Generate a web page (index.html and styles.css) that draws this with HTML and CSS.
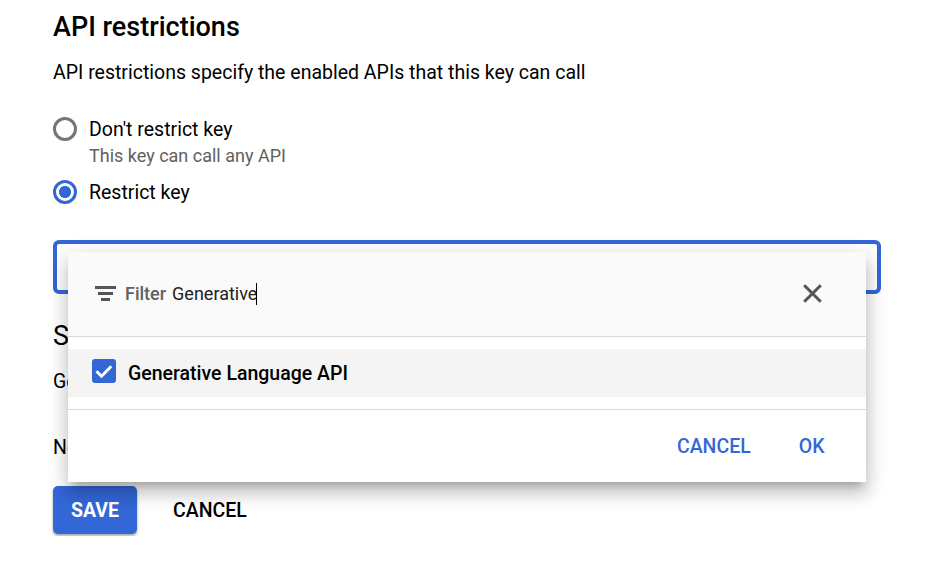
FILE: index.html
```html
<!DOCTYPE html>
<html lang="en">
<head>
<meta charset="utf-8">
<title>API restrictions</title>
<link rel="stylesheet" href="styles.css">
</head>
<body>
<main class="page">
  <h2 class="title">API restrictions</h2>
  <p class="intro">API restrictions specify the enabled APIs that this key can call</p>
  <div class="options">
    <div class="option">
      <span class="radio"></span>
      <div><div class="label">Don't restrict key</div><div class="hint">This key can call any API</div></div>
    </div>
    <div class="option">
      <span class="radio radio-on"></span>
      <div class="label">Restrict key</div>
    </div>
  </div>
  <div class="select">
    <section class="menu">
      <header class="filter">
        <svg class="filter-icon" width="21" height="15" viewBox="0 0 21 15"><path fill="#555" d="M0 0h21v3H0zM3 6h15v3H3zM6 12h9v3H6z"/></svg>
        <span class="filter-name">Filter</span>
        <span class="filter-value">Generative</span><span class="caret"></span>
        <svg class="close" width="19" height="19" viewBox="0 0 19 19"><path stroke="#555" stroke-width="3" fill="none" d="M1.2 1.2l16.6 16.6M17.8 1.2L1.2 17.8"/></svg>
      </header>
      <div class="list">
        <div class="row">
          <svg class="check" width="24" height="24" viewBox="0 0 24 24"><rect width="24" height="24" rx="3" fill="#3367d6"/><path d="M4.5 12.2l5 5L19.3 7.2" fill="none" stroke="#fff" stroke-width="2.9"/></svg>
          <span class="row-name">Generative Language API</span>
        </div>
      </div>
      <footer class="menu-actions"><span>CANCEL</span><span>OK</span></footer>
    </section>
  </div>
  <h3 class="subtitle">S</h3>
  <p class="selected">Ge</p>
  <p class="note">No</p>
  <div class="actions"><span class="save">SAVE</span><span class="cancel">CANCEL</span></div>
</main>
</body>
</html>
```
FILE: styles.css
```css
* { box-sizing: border-box; }
body {
  margin: 0;
  background: #fff;
  color: #000;
  font: 400 19.5px/30px Roboto, sans-serif;
  overflow: hidden;
}
h2, h3, p { margin: 0; }
.page { padding: 9px 49px 0 53px; }
.title { font-size: 27px; font-weight: 500; line-height: 36px; }
.intro { margin-top: 13px; }
.options { margin-top: 26px; }
.option { display: flex; gap: 12px; }
.label { line-height: 32px; }
.hint { font-size: 18px; line-height: 24px; color: #616161; margin: -2px 0 9px; }
.radio {
  width: 24px;
  height: 24px;
  margin-top: 3px;
  border: 3px solid #757575;
  border-radius: 50%;
}
.radio-on {
  border-color: #3367d6;
  background: radial-gradient(circle, #3367d6 5.7px, transparent 6.3px);
}
.select {
  position: relative;
  height: 54px;
  margin-top: 31px;
  border: 4px solid #3367d6;
  border-radius: 6px;
}
.menu {
  position: absolute;
  z-index: 2;
  top: 8px;
  left: 11px;
  width: 798px;
  height: 230px;
  background: #fff;
  box-shadow: 0 7.5px 7.5px -4.5px rgba(0, 0, 0, .2), 0 12px 15px 1.5px rgba(0, 0, 0, .14), 0 4.5px 21px 3px rgba(0, 0, 0, .12);
}
.filter {
  display: flex;
  align-items: center;
  height: 85px;
  padding: 0 44px 0 27px;
  border-bottom: 1px solid #dadada;
  background: #fafafa;
  font-size: 18px;
}
.filter-icon { margin-right: 9px; margin-top: -2px; }
.filter-name { color: #616161; font-weight: 500; margin-right: 6px; }
.filter-value { color: #212121; }
.caret { width: 1px; height: 22px; margin-left: -1px; background: #000; }
.close { margin-left: auto; margin-top: -1px; }
.list { padding: 12px 0; border-bottom: 1px solid #dadada; }
.row {
  display: flex;
  height: 48px;
  padding: 10px 24px;
  gap: 12px;
  background: #f4f4f4;
}
.row-name { font-weight: 500; line-height: 29px; }
.menu-actions {
  display: flex;
  justify-content: flex-end;
  gap: 48px;
  padding: 22px 41.5px 0 0;
  color: #3367d6;
  font-weight: 500;
}
.subtitle { margin-top: 24px; font-size: 27px; font-weight: 400; line-height: 36px; }
.selected { margin-top: 13px; }
.note { margin-top: 36px; }
.actions { display: flex; margin-top: 23px; line-height: 50px; font-weight: 500; }
.save {
  width: 84px;
  height: 48px;
  border-radius: 5px;
  background: #3367d6;
  color: #fff;
  text-align: center;
  font-weight: 700;
  box-shadow: 0 2px 3px rgba(0, 0, 0, .35);
}
.cancel { margin-left: 36px; }
```
